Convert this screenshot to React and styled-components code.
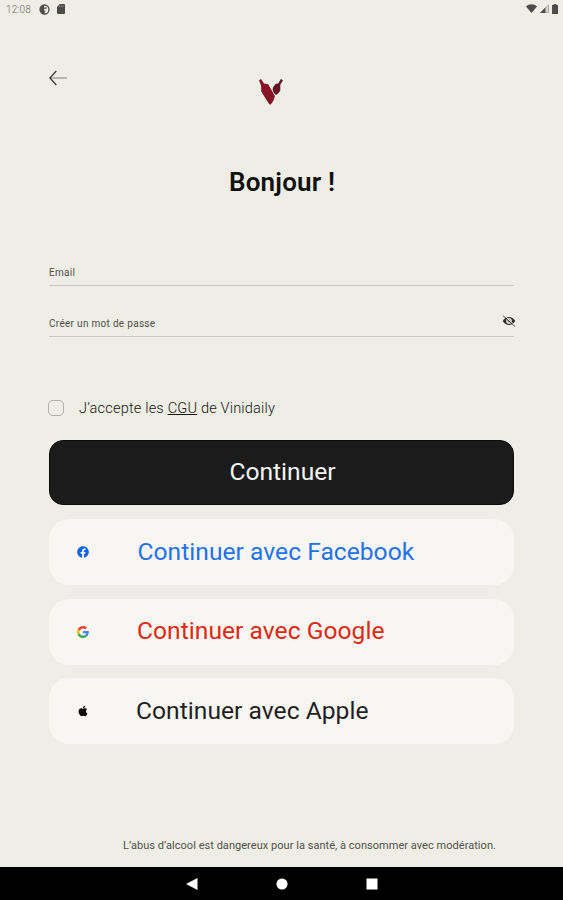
import React from 'react'
import styled, { createGlobalStyle } from 'styled-components'
import { FaFacebook, FaApple } from 'react-icons/fa'

const providers = [
  { id: 'facebook', label: 'Continuer avec Facebook', color: '#2372ec', left: 55.5, icon: <FaFacebook size={12} color="#1464e0" /> },
  { id: 'google', label: 'Continuer avec Google', color: '#e02814', left: 55, icon: <GoogleIcon /> },
  { id: 'apple', label: 'Continuer avec Apple', color: '#1f1f1f', left: 54, icon: <FaApple size={12} color="#0c0c0c" /> },
]

const App = () => {
  return (
    <Screen>
      <GlobalStyle />
      <StatusBar>
        <Clock>12:08</Clock>
        <LeftIcons>
          <svg width="11" height="11" viewBox="0 0 11 11">
            <circle cx="5.5" cy="5.5" r="4.5" fill="none" stroke="#4c4c49" strokeWidth="1.3" />
            <path d="M1 3.5 3.5 1l2 .2-.7 2.3H8L7.2 6 5 9.8 3.6 9.6 1.2 7z" fill="#4c4c49" />
            <path d="M5 4.8h3.2L6 8z" fill="#efeee6" />
          </svg>
          <svg width="8" height="10" viewBox="0 0 8 10">
            <path d="M2.8 0H7a1 1 0 0 1 1 1v8a1 1 0 0 1-1 1H1a1 1 0 0 1-1-1V3z" fill="#4c4c49" />
            <path d="M2.8 1.4v1.8M4.4 1.4v1.8M6 1.4v1.8" stroke="#a5a49e" strokeWidth=".6" />
          </svg>
        </LeftIcons>
        <RightIcons>
          <svg width="11" height="9" viewBox="0 0 11 9">
            <path d="M0 2.4C3.2-.5 7.8-.5 11 2.4L5.5 9z" fill="#4c4c49" />
          </svg>
          <svg width="9" height="9" viewBox="0 0 9 9">
            <path d="M8.5.7v7.8H.7z" fill="#d0cfc8" stroke="#85847f" strokeWidth=".5" />
            <path d="M5.4 3.6V9H0z" fill="#4c4c49" />
          </svg>
          <svg width="6" height="10" viewBox="0 0 6 10">
            <path d="M1.7 0h2.6v1H6v9H0V1h1.7z" fill="#4c4c49" />
          </svg>
        </RightIcons>
      </StatusBar>

      <Header>
        <BackButton aria-label="Retour">
          <svg width="18" height="16" viewBox="0 0 18 16">
            <path d="M2 8h16" stroke="#9a9994" strokeWidth="1.3" />
            <path d="M7.3 1 .9 8l6.4 7" fill="none" stroke="#333331" strokeWidth="1.2" />
          </svg>
        </BackButton>
        <Logo />
      </Header>

      <Title>Bonjour !</Title>

      <Form>
        <Field height={26}>
          <Label>Email</Label>
        </Field>
        <Field height={51}>
          <Label>Créer un mot de passe</Label>
          <EyeOff />
        </Field>
        <Terms>
          <Checkbox />
          <TermsText>J’accepte les <u>CGU</u> de Vinidaily</TermsText>
        </Terms>
        <Submit><span>Continuer</span></Submit>
        <Providers>
          {providers.map((item) => (
            <ProviderButton key={item.id}>
              <IconBox>{item.icon}</IconBox>
              <ProviderText color={item.color} left={item.left}>{item.label}</ProviderText>
            </ProviderButton>
          ))}
        </Providers>
      </Form>

      <Notice>L’abus d’alcool est dangereux pour la santé, à consommer avec modération.</Notice>

      <NavBar>
        <svg width="12" height="12" viewBox="0 0 12 12"><path d="M0 6 11.5 0v12z" fill="#fff" /></svg>
        <svg width="12" height="12" viewBox="0 0 12 12"><circle cx="6" cy="6" r="5.6" fill="#fff" /></svg>
        <svg width="12" height="12" viewBox="0 0 12 12"><path d="M.5.5h11v11H.5z" fill="#fff" /></svg>
      </NavBar>
    </Screen>
  )
}

export default App

function GoogleIcon() {
  return (
    <svg width="12" height="12" viewBox="0 0 48 48">
      <path fill="#EA4335" d="M24 9.5c3.54 0 6.71 1.22 9.21 3.6l6.85-6.85C35.9 2.38 30.47 0 24 0 14.62 0 6.51 5.38 2.56 13.22l7.98 6.19C12.43 13.72 17.74 9.5 24 9.5z" />
      <path fill="#4285F4" d="M46.98 24.55c0-1.57-.15-3.09-.38-4.55H24v9.02h12.94c-.58 2.96-2.26 5.48-4.78 7.18l7.73 6c4.51-4.18 7.09-10.36 7.09-17.65z" />
      <path fill="#FBBC05" d="M10.53 28.59c-.48-1.45-.76-2.99-.76-4.59s.27-3.14.76-4.59l-7.98-6.19C.92 16.46 0 20.12 0 24c0 3.88.92 7.54 2.56 10.78l7.97-6.19z" />
      <path fill="#34A853" d="M24 48c6.48 0 11.93-2.13 15.89-5.81l-7.73-6c-2.15 1.45-4.92 2.3-8.16 2.3-6.26 0-11.57-4.22-13.47-9.91l-7.98 6.19C6.51 42.62 14.62 48 24 48z" />
    </svg>
  )
}

function Logo() {
  return (
    <svg width="24" height="26" viewBox="0 0 24 26">
      <path d="M0 1.3 2 0l3 4.6 4.2.6L15.9 17c-.5 3.2-2 6-4.1 8.4-.7.4-1.4.1-1.9-.6L2.2 12.4V7z" fill="#861527" />
      <path d="M21.9 0 24 1.3l-2.7 4.5v5.8c-1 1.8-2.3 3.4-4.2 4.3-1.2-.6-2.3-1.8-2.9-3.1-.6-1.6-.8-2.9-.1-4.5l2.6-3.6 2.5-.3z" fill="#641629" />
    </svg>
  )
}

function EyeOff() {
  return (
    <svg width="14" height="12" viewBox="0 0 14 12">
      <path d="M.8 6C3.4.6 10.6.6 13.2 6c-2.6 5.4-9.8 5.4-12.4 0z" fill="#2f2f2d" />
      <circle cx="7" cy="6" r="2.9" fill="#d8d7cf" />
      <circle cx="7" cy="6" r="1.4" fill="#777670" />
      <path d="m2 0 11.5 11" stroke="#efeee6" strokeWidth="1" />
      <path d="m.8.5 12.4 11.2" stroke="#41413e" strokeWidth=".9" />
    </svg>
  )
}

const GlobalStyle = createGlobalStyle`
  * {
    box-sizing: border-box;
  }
  body {
    margin: 0;
    background-color: #efeee6;
    font-family: Roboto, "Liberation Sans", sans-serif;
  }
  button {
    border: 0;
    padding: 0;
    background: none;
    font-family: inherit;
  }
  svg {
    display: block;
    flex-shrink: 0;
  }
`
const Screen = styled.div`
  display: flex;
  flex-direction: column;
  width: 563px;
  height: 900px;
  overflow: hidden;
  background-color: #efeee6;
`
const StatusBar = styled.div`
  display: flex;
  align-items: center;
  height: 18px;
  padding: 0 5px 0 6px;
`
const Clock = styled.span`
  width: 33px;
  font-size: 10px;
  font-weight: 300;
  letter-spacing: 0.1px;
  color: #6d6c67;
`
const LeftIcons = styled.div`
  display: flex;
  align-items: center;
  gap: 7px;
`
const RightIcons = styled.div`
  display: flex;
  align-items: center;
  gap: 3px;
  margin: -1px 0 0 auto;
`
const Header = styled.header`
  display: grid;
  grid-template-columns: 210px 24px;
  align-items: start;
  height: 139px;
  padding: 61px 49px 0;
`
const BackButton = styled.button`
  width: 18px;
  margin-top: -9px;
`
const Title = styled.h1`
  margin: 8px 0 0 229px;
  height: 34px;
  line-height: 34px;
  font-size: 26px;
  font-weight: 600;
  letter-spacing: 0.2px;
  color: #101010;
`
const Form = styled.div`
  padding: 61px 49px 0;
`
const Field = styled.div`
  display: flex;
  align-items: flex-end;
  justify-content: space-between;
  height: ${(props) => props.height}px;
  border-bottom: 1px solid #c9c8c3;
  svg {
    margin: 0 -2px 9.5px 0;
  }
`
const Label = styled.label`
  padding-bottom: 6px;
  font-size: 10px;
  line-height: 13px;
  letter-spacing: 0.3px;
  color: #4f4f4b;
`
const Terms = styled.div`
  display: flex;
  align-items: center;
  height: 20px;
  margin: 61px 0 22px -1px;
`
const Checkbox = styled.span`
  width: 16px;
  height: 16px;
  border: 1px solid #b0afa9;
  border-radius: 5px;
`
const TermsText = styled.span`
  margin-left: 15px;
  font-size: 14.6px;
  font-weight: 300;
  letter-spacing: 0.16px;
  color: #161614;
`
const Submit = styled.button`
  display: flex;
  align-items: center;
  justify-content: center;
  width: 100%;
  height: 65px;
  padding: 0 0 2px 2px;
  border: 1px solid #0b0b0b;
  border-radius: 14px;
  background-color: #1b1b1b;
  font-size: 24.6px;
  color: #f5f5f5;
`
const Providers = styled.div`
  display: grid;
  gap: 13.5px;
  margin-top: 14px;
`
const ProviderButton = styled.button`
  display: flex;
  align-items: center;
  height: 66px;
  padding-left: 27px;
  border-radius: 20px;
  background-color: #f7f6f2;
`
const IconBox = styled.span`
  display: flex;
  justify-content: center;
  width: 13px;
`
const ProviderText = styled.span`
  margin-left: ${(props) => props.left - 7}px;
  padding-bottom: 2px;
  font-size: 24.6px;
  letter-spacing: 0.03px;
  color: ${(props) => props.color};
`
const Notice = styled.p`
  margin: auto 0 13px 123px;
  font-size: 11px;
  line-height: 16px;
  letter-spacing: 0.04px;
  white-space: nowrap;
  color: #51514d;
`
const NavBar = styled.nav`
  display: flex;
  align-items: center;
  justify-content: center;
  gap: 78px;
  height: 33px;
  background-color: #000;
`
